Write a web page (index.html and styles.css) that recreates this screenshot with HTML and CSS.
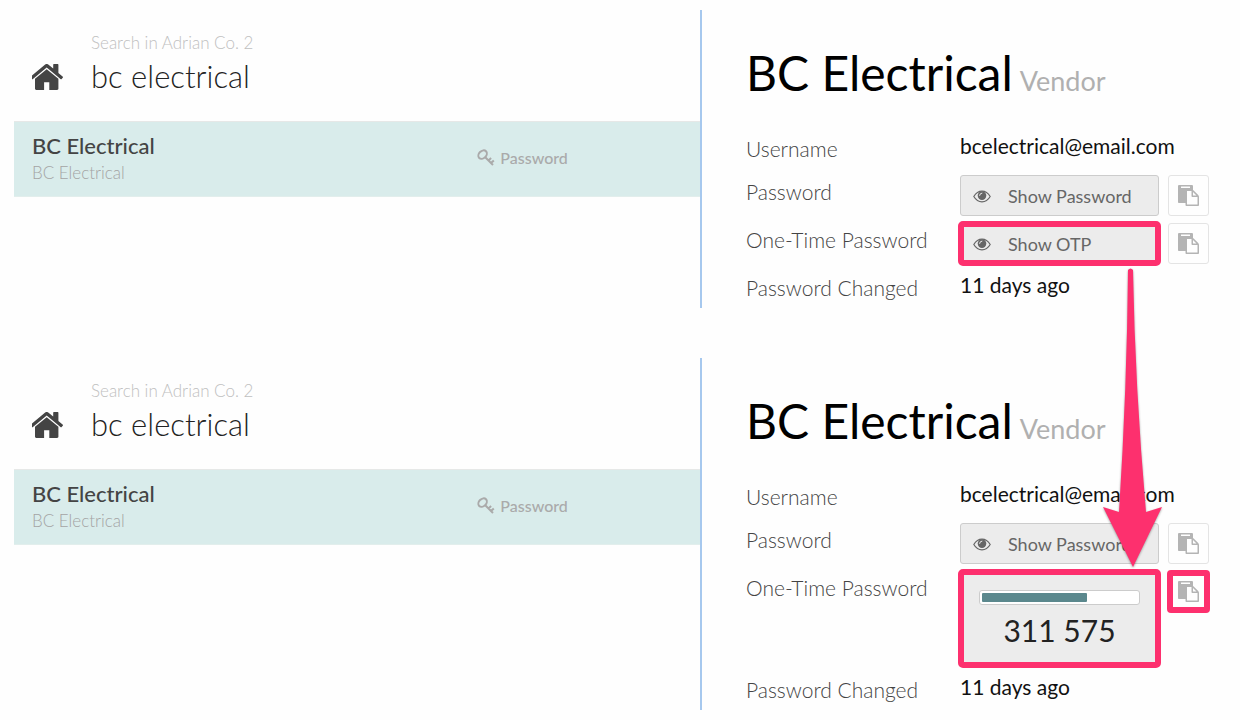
FILE: index.html
```html
<!DOCTYPE html>
<html lang="en">
<head>
<meta charset="utf-8">
<title>BC Electrical</title>
<link rel="stylesheet" href="styles.css">
</head>
<body>
<svg class="sprite" aria-hidden="true">
  <symbol id="home" viewBox="130 256 1532 1280"><path d="M1408 992v480q0 26-19 45t-45 19h-384v-384h-256v384h-384q-26 0-45-19t-19-45v-480q0-1 .5-3t.5-3l575-474 575 474q1 2 1 6zm223-69l-62 74q-8 9-21 11h-3q-13 0-21-7l-692-577-692 577q-12 8-24 7-13-2-21-11l-62-74q-8-10-7-23.5t11-21.5l719-599q32-26 76-26t76 26l244 204v-195q0-14 9-23t23-9h192q14 0 23 9t9 23v408l219 182q10 8 11 21.5t-7 23.5z"/></symbol>
  <symbol id="eye" viewBox="0 0 18 18"><path d="M.8 9.500Q4 4.200 9 4.200T17.200 9.500Q14 14.800 9 14.800T.8 9.500z" fill="none" stroke="currentColor" stroke-width="1.200"/><circle cx="9" cy="8.600" r="4.300"/><path d="M6.600 8.400Q6.700 6.200 8.900 6.100" fill="none" stroke="#ececec" stroke-width="1" stroke-linecap="round"/></symbol>
  <symbol id="paste" viewBox="0 0 1792 1792"><path d="M768 1664h896v-640h-416q-40 0-68-28t-28-68v-416h-384v1152zm256-1440v-64q0-13-9.5-22.5t-22.5-9.5h-704q-13 0-22.5 9.5t-9.5 22.5v64q0 13 9.5 22.5t22.5 9.5h704q13 0 22.5-9.5t9.5-22.5zm256 672h299l-299-299v299zm512 128v672q0 40-28 68t-68 28h-960q-40 0-68-28t-28-68v-160h-544q-40 0-68-28t-28-68v-1344q0-40 28-68t68-28h1088q40 0 68 28t28 68v328q21 13 36 28l408 408q28 28 48 76t20 88z"/></symbol>
  <symbol id="key" viewBox="0 0 18 18"><g fill="none" stroke="currentColor" stroke-width="2"><ellipse cx="5.6" cy="5.6" rx="4.8" ry="3.6" transform="rotate(-45 5.6 5.6)"/><path d="M8 8l8 8M11.5 11.5l2.6-2.4M14 14l2.8-2.6"/></g></symbol>
</svg>

<main class="page">
  <section class="panel">
    <div class="browse">
      <form class="search">
        <a class="home" href="#" aria-label="Home"><svg><use href="#home"/></svg></a>
        <div class="search-field">
          <label for="search-1">Search in Adrian Co. 2</label>
          <input id="search-1" type="text" value="bc electrical">
        </div>
      </form>
      <ul class="results">
        <li>
          <a class="result" href="#">
            <span class="result-text"><span class="result-name">BC Electrical</span><span class="result-sub">BC Electrical</span></span>
            <span class="result-kind"><svg><use href="#key"/></svg>Password</span>
          </a>
        </li>
      </ul>
    </div>
    <div class="details">
      <h1>BC Electrical <small>Vendor</small></h1>
      <dl class="fields">
        <dt>Username</dt>
        <dd class="text">bcelectrical@email.com</dd>
        <dt>Password</dt>
        <dd class="controls">
          <button class="show" type="button"><svg><use href="#eye"/></svg>Show Password</button>
          <button class="copy" type="button" aria-label="Copy password"><svg><use href="#paste"/></svg></button>
        </dd>
        <dt>One-Time Password</dt>
        <dd class="controls">
          <button class="show marked" type="button"><svg><use href="#eye"/></svg>Show OTP</button>
          <button class="copy" type="button" aria-label="Copy one-time password"><svg><use href="#paste"/></svg></button>
          <svg class="arrow" viewBox="0 0 64 304" aria-hidden="true"><path d="M28 4Q30.500 1 33 4Q35 120 46 246L62 241L33 301L3 241L19 246Q27 120 28 4z"/></svg>
        </dd>
        <dt>Password Changed</dt>
        <dd class="text">11 days ago</dd>
      </dl>
    </div>
  </section>

  <section class="panel">
    <div class="browse">
      <form class="search">
        <a class="home" href="#" aria-label="Home"><svg><use href="#home"/></svg></a>
        <div class="search-field">
          <label for="search-2">Search in Adrian Co. 2</label>
          <input id="search-2" type="text" value="bc electrical">
        </div>
      </form>
      <ul class="results">
        <li>
          <a class="result" href="#">
            <span class="result-text"><span class="result-name">BC Electrical</span><span class="result-sub">BC Electrical</span></span>
            <span class="result-kind"><svg><use href="#key"/></svg>Password</span>
          </a>
        </li>
      </ul>
    </div>
    <div class="details">
      <h1>BC Electrical <small>Vendor</small></h1>
      <dl class="fields">
        <dt>Username</dt>
        <dd class="text">bcelectrical@email.com</dd>
        <dt>Password</dt>
        <dd class="controls">
          <button class="show" type="button"><svg><use href="#eye"/></svg>Show Password</button>
          <button class="copy" type="button" aria-label="Copy password"><svg><use href="#paste"/></svg></button>
        </dd>
        <dt>One-Time Password</dt>
        <dd class="controls">
          <div class="otp marked">
            <div class="timer" role="progressbar" aria-label="Time left" aria-valuenow="68"><div class="timer-fill" style="width: 68%"></div></div>
            <output class="code">311 575</output>
          </div>
          <button class="copy marked" type="button" aria-label="Copy one-time password"><svg><use href="#paste"/></svg></button>
        </dd>
        <dt>Password Changed</dt>
        <dd class="text">11 days ago</dd>
      </dl>
    </div>
  </section>
</main>
</body>
</html>
```
FILE: styles.css
```css
* { box-sizing: border-box; }

body {
  margin: 0;
  background: #fefefe;
  color: #111;
  font-family: Lato, "Liberation Sans", sans-serif;
  font-size: 21px;
}

a { color: inherit; text-decoration: none; }
button, input { font: inherit; }
svg { fill: currentColor; flex: none; }

.sprite { position: absolute; width: 0; height: 0; }

.page {
  display: flex;
  flex-direction: column;
  gap: 50px;
  padding: 10px 0 10px 14px;
}

.panel {
  display: grid;
  grid-template-columns: 688fr 538fr;
}

.browse { border-right: 2px solid #a6c8ee; }

.search {
  display: flex;
  align-items: flex-end;
  gap: 27px;
  padding: 20px 18px 0;
}

.home { color: #444; margin-bottom: 31px; }
.home svg { display: block; width: 32px; height: 26px; }

.search-field {
  display: flex;
  flex: 1;
  flex-direction: column;
  padding-bottom: 25px;
}

.search-field label {
  color: #c0c0c0;
  font-size: 17px;
  font-weight: 300;
  line-height: 26px;
}

.search-field input {
  width: 100%;
  height: 40px;
  padding: 0;
  border: 0;
  background: none;
  color: #222;
  font-size: 31px;
  font-weight: 300;
}

.results { margin: 0; padding: 0; list-style: none; }

.result {
  display: grid;
  grid-template-columns: 2fr 1fr;
  align-items: center;
  padding: 10px 0 11px 18px;
  border-top: 1px solid #e6e8e7;
  border-bottom: 1px solid #e2eeec;
  background: #d9eceb;
}

.result-text { display: flex; flex-direction: column; }
.result-name { color: #444; font-size: 22px; font-weight: 500; line-height: 28px; }
.result-sub { color: #a4a4a4; font-size: 17px; font-weight: 300; line-height: 25px; }

.result-kind {
  display: flex;
  align-items: center;
  gap: 5px;
  padding-bottom: 2px;
  color: #aaa;
  font-size: 16px;
  font-weight: 500;
}

.result-kind svg { width: 18px; height: 18px; }

.details { padding: 31px 0 0 44px; }

h1 {
  display: flex;
  align-items: baseline;
  gap: 7px;
  margin: 0 0 19px;
  color: #000;
  font-size: 48px;
  font-weight: 400;
  line-height: 64px;
}

h1 small { color: #b0b0b0; font-size: 27px; }

.fields {
  display: grid;
  grid-template-columns: 214px 1fr;
  margin: 0;
}

.fields dt {
  color: #444;
  font-weight: 300;
  line-height: 34px;
}

.fields dd { margin: 0; }
.text { min-height: 37px; line-height: 28px; }
.fields .text:nth-of-type(1) { min-height: 43px; }

.controls {
  position: relative;
  display: flex;
  align-items: flex-start;
  gap: 9px;
  padding-bottom: 7px;
}

.show {
  display: flex;
  align-items: center;
  gap: 17px;
  width: 199px;
  height: 41px;
  padding: 0 12px;
  border: 1px solid #ccc;
  border-radius: 3px;
  background: #ececec;
  color: #666;
  font-size: 18px;
}

.show svg { width: 18px; height: 18px; }

.copy {
  display: grid;
  place-items: center;
  width: 41px;
  height: 41px;
  padding: 0;
  border: 1px solid #e4e4e4;
  border-radius: 3px;
  background: #fefefe;
  color: #b4b4b4;
}

.copy svg { width: 21px; height: 21px; }

.otp {
  width: 199px;
  padding: 19px 19px 18px;
  border-radius: 3px;
  background: #ececec;
}

.timer {
  height: 15px;
  padding: 2px;
  border: 1px solid #ccc;
  border-radius: 3px;
  background: #fff;
}

.timer-fill { height: 9px; border-radius: 1px; background: #5b888d; }

.code {
  display: block;
  margin-top: 7px;
  color: #222;
  font-size: 30px;
  line-height: 36px;
  text-align: center;
}

.marked { outline: 6px solid #fd306e; outline-offset: -4px; }
.copy.marked { outline-offset: -5px; }

.arrow {
  position: absolute;
  top: 43px;
  left: 140px;
  z-index: 1;
  width: 64px;
  height: 304px;
  color: #fd306e;
  filter: drop-shadow(0 1px 1px rgb(0 0 0 / 35%));
}
```
